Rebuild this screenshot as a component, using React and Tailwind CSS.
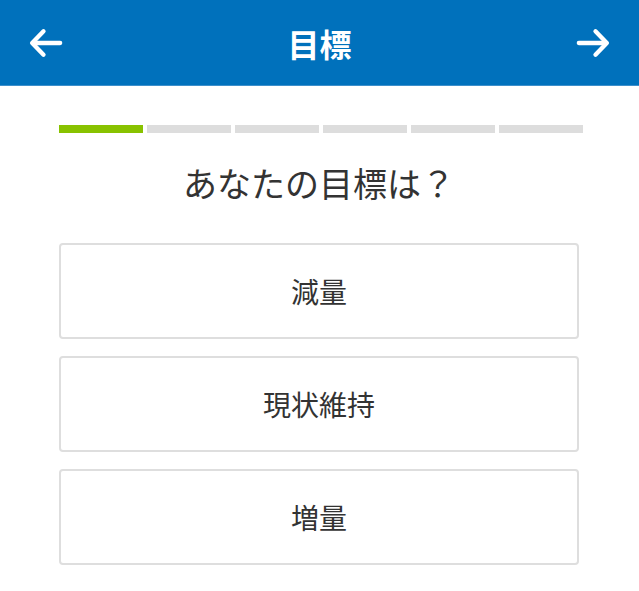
import React from 'react';

const Arrow = ({ dir }) => (
  <svg width="40" height="40" viewBox="0 0 24 24" fill="none" stroke="white" strokeWidth="2.6" strokeLinecap="round" strokeLinejoin="round">
    {dir === 'left' ? (
      <>
        <path d="M20.5 12H4" />
        <path d="M10.5 5l-6.8 7 6.8 7" />
      </>
    ) : (
      <>
        <path d="M3.5 12H20" />
        <path d="M13.5 5l6.8 7-6.8 7" />
      </>
    )}
  </svg>
);

const App = () => {
  const options = ['減量', '現状維持', '増量'];
  const steps = [true, false, false, false, false, false];

  return (
    <div
      className="min-h-screen bg-white"
      style={{ fontFamily: '"Noto Sans CJK JP", "Noto Sans", sans-serif' }}
    >
      {/* Header */}
      <div className="h-[86px] bg-[#0071bc] border-b border-[#3d8fcb] flex items-center justify-between px-[26px]">
        <Arrow dir="left" />
        <h1 className="text-[32px] font-bold text-white leading-none">目標</h1>
        <Arrow dir="right" />
      </div>

      <div className="px-[59px] pt-[39px]">
        {/* Progress */}
        <div className="flex gap-[4px] w-[524px]">
          {steps.map((done, i) => (
            <div key={i} className={`h-[8px] flex-1 ${done ? 'bg-[#88c200]' : 'bg-[#dddddd]'}`}></div>
          ))}
        </div>

        <h2 className="mt-[27px] text-center text-[34px] text-[#333] font-normal leading-[46px] w-[520px]">
          あなたの目標は？
        </h2>

        <div className="mt-[37px] flex flex-col gap-[17px] w-[520px]">
          {options.map((o) => (
            <button
              key={o}
              className="h-[96px] border-2 border-[#dedede] rounded-[4px] bg-white text-[28px] text-[#333] flex items-center justify-center"
            >
              {o}
            </button>
          ))}
        </div>
      </div>
    </div>
  );
};

export default App;
